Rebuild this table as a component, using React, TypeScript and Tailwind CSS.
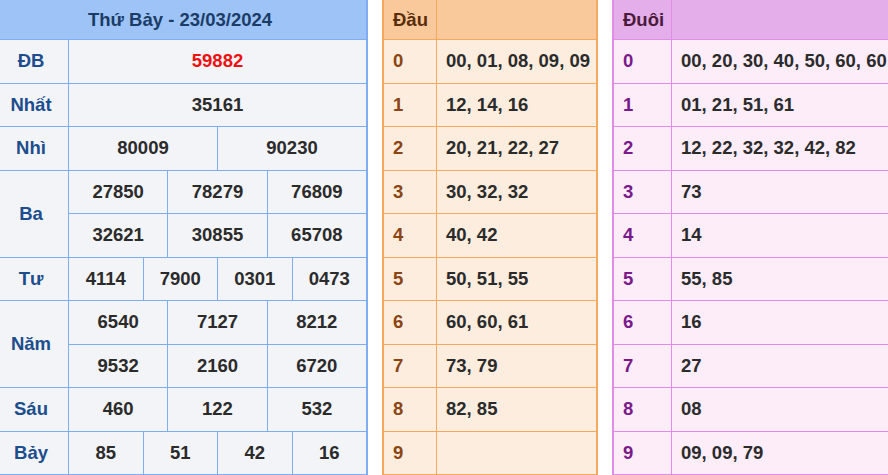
const prizes = [
  { label: "ĐB", lines: [["59882"]], red: true },
  { label: "Nhất", lines: [["35161"]] },
  { label: "Nhì", lines: [["80009", "90230"]] },
  { label: "Ba", lines: [["27850", "78279", "76809"], ["32621", "30855", "65708"]] },
  { label: "Tư", lines: [["4114", "7900", "0301", "0473"]] },
  { label: "Năm", lines: [["6540", "7127", "8212"], ["9532", "2160", "6720"]] },
  { label: "Sáu", lines: [["460", "122", "532"]] },
  { label: "Bảy", lines: [["85", "51", "42", "16"]] },
];

const dau = ["00, 01, 08, 09, 09", "12, 14, 16", "20, 21, 22, 27", "30, 32, 32", "40, 42", "50, 51, 55", "60, 60, 61", "73, 79", "82, 85", ""];
const duoi = ["00, 20, 30, 40, 50, 60, 60", "01, 21, 51, 61", "12, 22, 32, 32, 42, 82", "73", "14", "55, 85", "16", "27", "08", "09, 09, 79"];

function ResultTable() {
  return (
    <div className="flex-none w-[374px] -ml-[6px] border-r-2 border-[#7eaef1] bg-[#f3f4f8]">
      <div className="h-10 flex items-center justify-center bg-[#9ec4f7] border-b border-[#7eaef1] text-[#1b3c66]">
        Thứ Bảy - 23/03/2024
      </div>
      {prizes.map((p) => (
        <div key={p.label} className="flex border-b border-[#7eaef1]" style={{ height: p.lines.length * 43.5 }}>
          <div className="w-[75px] flex-none flex items-center justify-center border-r border-[#7eaef1] text-[#1c4d8c]">
            {p.label}
          </div>
          <div className="flex-1 flex flex-col">
            {p.lines.map((line, i) => (
              <div key={i} className={"flex-1 flex " + (i > 0 ? "border-t border-[#7eaef1]" : "")}>
                {line.map((n, j) => (
                  <div
                    key={j}
                    className={
                      "flex-1 flex items-center justify-center " +
                      (j > 0 ? "border-l border-[#7eaef1] " : "") +
                      (p.red ? "text-[#ee1111]" : "text-[#2b2b2b]")
                    }
                  >
                    {n}
                  </div>
                ))}
              </div>
            ))}
          </div>
        </div>
      ))}
    </div>
  );
}

function LotoTable({ title, items, variant }: { title: string; items: string[]; variant: "dau" | "duoi" }) {
  const isDau = variant === "dau";
  const border = isDau ? "border-[#f5a95e]" : "border-[#e18ce6]";
  return (
    <div
      className={
        isDau
          ? "flex-none w-[216px] ml-[14px] border-x-2 border-[#f5a95e] bg-[#fdeddf]"
          : "flex-1 ml-[14px] border-l-2 border-[#e18ce6] bg-[#fcedf9]"
      }
    >
      <div className={"h-10 flex border-b " + border + (isDau ? " bg-[#f9c99b]" : " bg-[#e3aee9]")}>
        <div
          className={
            "flex-none flex items-center pl-[9px] border-r " +
            border +
            (isDau ? " w-[53px] text-[#5a2d0c]" : " w-[58px] text-[#4a1a3a]")
          }
        >
          {title}
        </div>
        <div className="flex-1" />
      </div>
      {items.map((v, i) => (
        <div key={i} className={"h-[43.5px] flex border-b " + border}>
          <div
            className={
              "flex-none flex items-center pl-[9px] border-r " +
              border +
              (isDau ? " w-[53px] text-[#8b4513]" : " w-[58px] text-[#7a1a8a]")
            }
          >
            {i}
          </div>
          <div className="flex-1 flex items-center pl-[9px] text-[#2b2b2b] whitespace-nowrap overflow-hidden">{v}</div>
        </div>
      ))}
    </div>
  );
}

export default function App() {
  return (
    <div className="w-[888px] h-[475px] overflow-hidden bg-white flex font-['Liberation_Sans',Arial,sans-serif] font-bold text-[18.5px]">
      <ResultTable />
      <LotoTable title="Đầu" items={dau} variant="dau" />
      <LotoTable title="Đuôi" items={duoi} variant="duoi" />
    </div>
  );
}
